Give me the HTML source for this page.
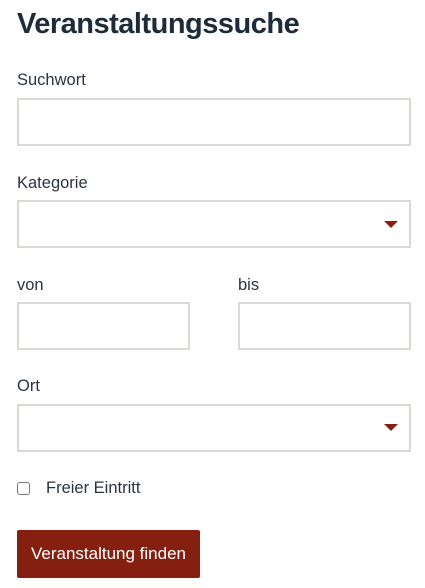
<!DOCTYPE html>
<html><head><meta charset="utf-8"><style>
*{margin:0;padding:0;box-sizing:border-box}
body{width:425px;height:588px;background:#fff;font-family:"Liberation Sans",sans-serif;color:#2a3440;position:relative;overflow:hidden}
h1{position:absolute;left:17px;top:8px;font-size:29px;font-weight:bold;color:#1e2b3a;letter-spacing:-0.5px}
.l{position:absolute;font-size:16.5px;color:#2a3440}
.box{position:absolute;border:2px solid #dcd8d4;background:#fff}
.tri{position:absolute;width:0;height:0;border-left:7px solid transparent;border-right:7px solid transparent;border-top:7px solid #862010}
.btn{position:absolute;left:17px;top:530px;width:183px;height:48px;background:#852010;border-radius:2px;color:#fff;font-size:17px;line-height:48px;text-align:center}
.cb{position:absolute;left:17px;top:482px;width:13px;height:13px;border:1px solid #777;border-radius:3px;background:#fff}
</style></head><body>
<h1>Veranstaltungssuche</h1>
<div class="l" style="left:17px;top:71px">Suchwort</div>
<div class="box" style="left:17px;top:98px;width:394px;height:48px"></div>
<div class="l" style="left:17px;top:174px">Kategorie</div>
<div class="box" style="left:17px;top:200px;width:394px;height:48px"></div>
<div class="tri" style="left:384px;top:221px"></div>
<div class="l" style="left:17px;top:276px">von</div>
<div class="l" style="left:238px;top:276px">bis</div>
<div class="box" style="left:17px;top:302px;width:173px;height:48px"></div>
<div class="box" style="left:238px;top:302px;width:173px;height:48px"></div>
<div class="l" style="left:17px;top:377px">Ort</div>
<div class="box" style="left:17px;top:404px;width:394px;height:48px"></div>
<div class="tri" style="left:384px;top:424px"></div>
<div class="cb"></div>
<div class="l" style="left:46px;top:479px">Freier Eintritt</div>
<div class="btn">Veranstaltung finden</div>
</body></html>
